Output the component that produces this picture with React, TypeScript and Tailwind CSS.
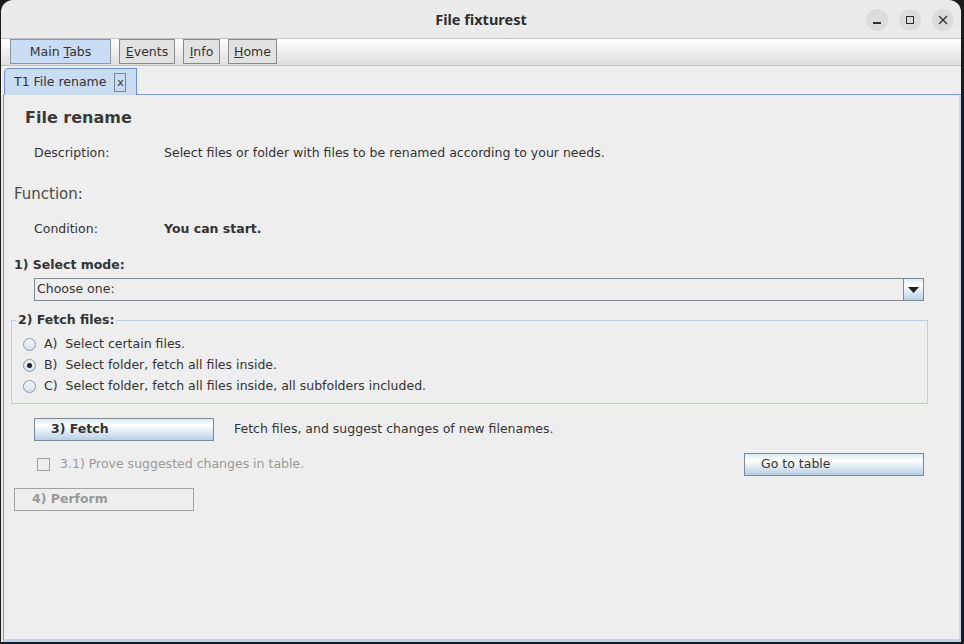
import React from "react";

const dv = { fontFamily: '"DejaVu Sans", Verdana, sans-serif' };
const btnGrad =
  "bg-[linear-gradient(to_bottom,#dde8f3_0%,#ffffff_30%,#b8cfe5_100%)] border border-[#7a8a99]";

function MenuButton({ children, active, w }: { children: React.ReactNode; active?: boolean; w: string }) {
  return (
    <div
      className={`flex h-[25px] items-center justify-center border pt-[2px] text-[12.5px] text-[#333] ${w} ${
        active ? "border-[#8a96a3] bg-[#c9dcf4]" : "border-[#8a8a8a] bg-[#e2e2e2]"
      }`}
    >
      {children}
    </div>
  );
}

function Radio({ checked, label }: { checked?: boolean; label: string }) {
  return (
    <div className="flex h-[21px] items-center">
      <span className="ml-[11px] flex h-[13px] w-[13px] items-center justify-center rounded-full border border-[#8a9aab] bg-[linear-gradient(to_bottom,#f4f7fb,#d4e1ee)]">
        {checked && <span className="h-[5px] w-[5px] rounded-full bg-[#222]" />}
      </span>
      <span className="ml-[8px] whitespace-pre text-[12.5px] text-[#333]">{label}</span>
    </div>
  );
}

export default function App() {
  return (
    <div className="h-[644px] w-[964px] bg-[#1c1c1c] pl-[1px] pr-[3px] pb-[2px]" style={dv}>
      <div className="flex h-full flex-col overflow-hidden rounded-t-[12px] bg-[#ebebeb]">
        {/* title bar */}
        <div className="relative flex h-[38px] shrink-0 items-center justify-center pt-[2px]">
          <span
            className="text-[14.5px] font-bold text-[#2e2e2e]"
            style={{ fontFamily: '"Noto Sans", "DejaVu Sans", sans-serif' }}
          >
            File fixturest
          </span>
          <div className="absolute right-[7px] top-[9px] flex gap-[11px]">
            <span className="flex h-[22px] w-[22px] items-center justify-center rounded-full bg-[#dcdcdc]">
              <span className="mt-[6px] h-[1.5px] w-[8px] bg-[#2e2e2e]" />
            </span>
            <span className="flex h-[22px] w-[22px] items-center justify-center rounded-full bg-[#dcdcdc]">
              <span className="h-[8px] w-[8px] border border-[#2e2e2e]" />
            </span>
            <span className="flex h-[22px] w-[22px] items-center justify-center rounded-full bg-[#dcdcdc]">
              <svg width="10" height="10" viewBox="0 0 10 10">
                <path d="M1 1L9 9M9 1L1 9" stroke="#2e2e2e" strokeWidth="1.3" />
              </svg>
            </span>
          </div>
        </div>

        {/* menu bar */}
        <div className="flex h-[28px] shrink-0 items-start gap-[8px] border-y border-[#c2c2c2] bg-[linear-gradient(to_bottom,#ffffff,#dedede)] pl-[9px]">
          <MenuButton active w="w-[101px]">
            <span>
              Main <u>T</u>abs
            </span>
          </MenuButton>
          <MenuButton w="w-[56px]">
            <span>
              <u>E</u>vents
            </span>
          </MenuButton>
          <MenuButton w="w-[37px]">
            <span>
              <u>I</u>nfo
            </span>
          </MenuButton>
          <MenuButton w="w-[49px]">
            <span>
              <u>H</u>ome
            </span>
          </MenuButton>
        </div>

        {/* tabs row */}
        <div className="flex h-[29px] shrink-0 items-end bg-[#eeeeee] pl-[3px]">
          <div className="flex h-[27px] w-[133px] items-center rounded-tl-[5px] border-x border-t border-[#6f8fcf] bg-[#c8dcf2] pl-[9px] text-[12.5px] text-[#333]">
            <span>T1 File rename</span>
            <span className="ml-[8px] flex h-[19px] w-[12px] items-center justify-center border border-[#7a8594] text-[11px] leading-none">
              x
            </span>
          </div>
          <div className="h-[1px] flex-1 bg-[#7c9fd3]" />
        </div>

        {/* content panel */}
        <div className="ml-[2px] flex-1 border-l border-[#6f8fcf] border-b-[3px] border-b-[#bed3ea] border-r-[2px] border-r-[#c5d8ec] bg-[#eeeeee] text-[#333]">
          <div className="mt-[12px] h-[22px] pl-[21px] text-[16px] font-bold leading-[22px] text-[#3a3a3a]">
            File rename
          </div>

          <div className="mt-[16px] flex h-[16px] items-center pl-[30px] text-[12.5px]">
            <span className="w-[130px]">Description:</span>
            <span>Select files or folder with files to be renamed according to your needs.</span>
          </div>

          <div className="mt-[23px] flex h-[20px] items-center pl-[10px] text-[15px] text-[#4a4a4a]">Function:</div>

          <div className="mt-[17px] flex h-[16px] items-center pl-[30px] text-[12.5px]">
            <span className="w-[130px]">Condition:</span>
            <span className="font-bold">You can start.</span>
          </div>

          <div className="mt-[20px] flex h-[16px] items-center pl-[10px] text-[12.5px] font-bold">1) Select mode:</div>

          <div className="ml-[30px] mt-[5px] flex h-[23px] w-[890px] border border-[#7a8a99] bg-[#eeeeee]">
            <span className="flex flex-1 items-center pl-[2px] text-[12.5px]">Choose one:</span>
            <span className={`flex h-full w-[20px] items-center justify-center border-y-0 border-r-0 ${btnGrad}`}>
              <svg width="11" height="6" viewBox="0 0 11 6">
                <path d="M0 0H11L5.5 6Z" fill="#222" />
              </svg>
            </span>
          </div>

          <div className="relative ml-[7px] mt-[19px] h-[84px] w-[917px] border border-[#b8d0e6]">
            <span className="absolute left-[4px] top-[-9px] bg-[#eeeeee] px-[2px] text-[12.5px] font-bold leading-[16px]">
              2) Fetch files:
            </span>
            <div className="pt-[13px]">
              <Radio label="A)  Select certain files." />
              <Radio checked label="B)  Select folder, fetch all files inside." />
              <Radio label="C)  Select folder, fetch all files inside, all subfolders included." />
            </div>
          </div>

          <div className="ml-[30px] mt-[14px] flex h-[23px] items-center text-[12.5px]">
            <div className={`flex h-[23px] w-[180px] items-center pl-[16px] font-bold ${btnGrad}`}>3) Fetch</div>
            <span className="ml-[20px]">Fetch files, and suggest changes of new filenames.</span>
          </div>

          <div className="ml-[30px] mt-[12px] flex h-[23px] w-[890px] items-center justify-between text-[12.5px]">
            <div className="flex items-center pl-[3px] text-[#999]">
              <span className="h-[13px] w-[13px] border border-[#a0a0a0] bg-[#eeeeee]" />
              <span className="ml-[10px]">3.1) Prove suggested changes in table.</span>
            </div>
            <div className={`flex h-[23px] w-[180px] items-center pl-[16px] ${btnGrad}`}>Go to table</div>
          </div>

          <div className="ml-[10px] mt-[12px] flex h-[23px] w-[180px] items-center border border-[#a3a3a3] pl-[17px] text-[12.5px] font-bold text-[#999]">
            4) Perform
          </div>
        </div>
      </div>
    </div>
  );
}
